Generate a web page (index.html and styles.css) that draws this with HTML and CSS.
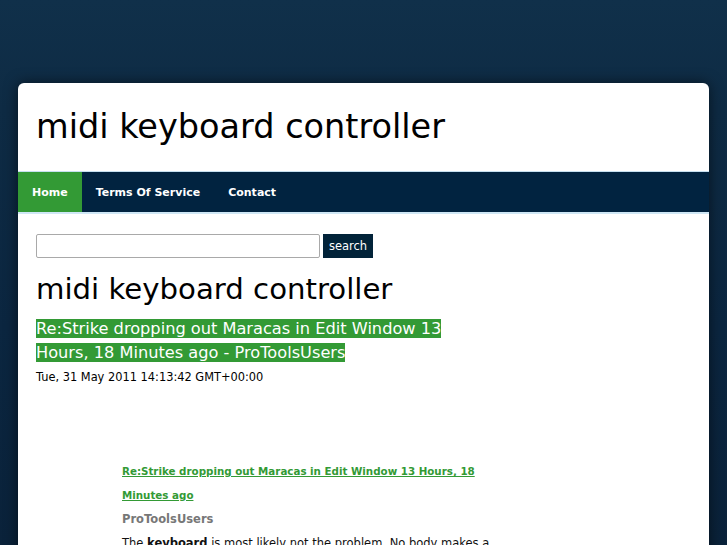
FILE: index.html
```html
<!DOCTYPE html>
<html>
<head>
<meta charset="utf-8">
<title>midi keyboard controller</title>
<link rel="stylesheet" href="styles.css">
</head>
<body>
<div class="page">
  <div class="card">
    <header class="site-header">
      <h1 class="site-title">midi keyboard controller</h1>
    </header>
    <nav class="nav">
      <a class="nav-item active" href="#">Home</a>
      <a class="nav-item" href="#">Terms Of Service</a>
      <a class="nav-item" href="#">Contact</a>
    </nav>
    <main class="content">
      <form class="search">
        <input class="search-input" type="text">
        <button class="search-btn" type="button">search</button>
      </form>
      <h2 class="page-title">midi keyboard controller</h2>
      <h3 class="post-title"><span class="hl">Re:Strike dropping out Maracas in Edit Window 13 Hours, 18 Minutes ago - ProToolsUsers</span></h3>
      <div class="date">Tue, 31 May 2011 14:13:42 GMT+00:00</div>
      <div class="entry">
        <a class="entry-link" href="#">Re:Strike dropping out Maracas in Edit Window 13 Hours, 18 Minutes ago</a>
        <div class="entry-source">ProToolsUsers</div>
        <p class="entry-text">The <b>keyboard</b> is most likely not the problem. No body makes a better keyboard controller than this one.</p>
      </div>
    </main>
  </div>
</div>
</body>
</html>
```

FILE: styles.css
```css
html, body {
  margin: 0;
  padding: 0;
  height: 100%;
  overflow: hidden;
}
body {
  background: linear-gradient(to bottom, #10304a 0%, #0e2b44 20%, #0b2640 60%, #0a223a 100%);
  font-family: "DejaVu Sans", sans-serif;
  color: #000;
}
.page {
  padding: 83px 18px 0;
}
.card {
  background: #fff;
  border-radius: 6px 6px 0 0;
  box-shadow: 0 0 14px rgba(0, 0, 0, 0.55);
  min-height: 600px;
}
.site-header {
  height: 88px;
  display: flex;
  align-items: center;
  padding: 0 18px;
}
.site-title {
  margin: 0;
  font-weight: normal;
  font-size: 33.5px;
  line-height: 1;
}
.nav {
  display: flex;
  height: 40px;
  background: #012340;
  border-top: 1px solid #c6e0f0;
  border-bottom: 2px solid #cfe7f5;
}
.nav-item {
  display: flex;
  align-items: center;
  padding: 0 14px;
  color: #fff;
  font-weight: bold;
  font-size: 11px;
  text-decoration: none;
}
.nav-item.active {
  background: #339a35;
}
.content {
  padding: 20px 18px 0;
}
.search {
  display: flex;
  gap: 3px;
  margin: 0;
}
.search-input {
  width: 284px;
  height: 24px;
  box-sizing: border-box;
  border: 1px solid #a9a9a9;
  border-radius: 2px;
  margin: 0;
  padding: 0 4px;
}
.search-btn {
  height: 24px;
  width: 50px;
  box-sizing: border-box;
  border: none;
  margin: 0;
  padding: 0;
  background: #022339;
  color: #fff;
  font-family: "DejaVu Sans", sans-serif;
  font-size: 11.5px;
}
.page-title {
  margin: 11px 0 8px;
  font-weight: normal;
  font-size: 29.2px;
  line-height: 40px;
}
.post-title {
  margin: 0;
  font-weight: normal;
  font-size: 16.2px;
  line-height: 24px;
  max-width: 460px;
}
.hl {
  background: #339a35;
  color: #fff;
}
.date {
  font-size: 11.4px;
  line-height: 16px;
  margin-top: 4px;
}
.entry {
  margin: 74px 0 0 86px;
  width: 370px;
}
.entry-link {
  color: #339a35;
  font-weight: bold;
  font-size: 10.3px;
  line-height: 24px;
}
.entry-source {
  color: #777;
  font-weight: bold;
  font-size: 11.5px;
  line-height: 24px;
}
.entry-text {
  margin: 0;
  font-size: 11.5px;
  line-height: 24px;
  color: #111;
}
```
